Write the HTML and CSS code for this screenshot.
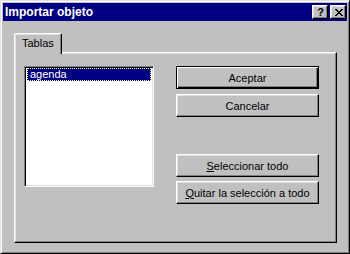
FILE: index.html
```html
<!DOCTYPE html>
<html lang="es">

<head>
    <meta charset="UTF-8">
    <meta name="viewport" content="width=device-width, initial-scale=1.0">
    <title>Importar objeto</title>
    <link rel="stylesheet" href="styles.css">
</head>

<body>
    <div class="window">
        <div class="titlebar">
            <span class="title">Importar objeto</span>
            <div class="controls">
                <button class="ctl">?</button>
                <button class="ctl">
                    <svg width="8" height="7" viewBox="0 0 8 7">
                        <path d="M0 0h2v1h1v1h2v-1h1v-1h2v1h-1v1h-1v1h-1v1h1v1h1v1h1v1h-2v-1h-1v-1h-2v1h-1v1h-2v-1h1v-1h1v-1h1v-1h-1v-1h-1v-1h-1z" fill="#000"/>
                    </svg>
                </button>
            </div>
        </div>
        <div class="content">
            <div class="tabs">
                <div class="tab">Tablas</div>
            </div>
            <div class="panel">
                <div class="listbox">
                    <div class="item selected">agenda</div>
                </div>
                <div class="actions">
                    <button class="btn default">Aceptar</button>
                    <button class="btn">Cancelar</button>
                    <button class="btn spaced"><u>S</u>eleccionar todo</button>
                    <button class="btn"><u>Q</u>uitar la selección a todo</button>
                </div>
            </div>
        </div>
    </div>
</body>

</html>
```

FILE: styles.css
```css
* {
    margin: 0;
    padding: 0;
    box-sizing: border-box;
}

body {
    background: #c0c0c0;
    font-family: 'Liberation Sans', Arial, sans-serif;
    font-size: 11px;
    color: #000;
}

/* window frame */
.window {
    width: 350px;
    height: 254px;
    display: flex;
    flex-direction: column;
    background: #c0c0c0;
    border: 1px solid;
    border-color: #dfdfdf #000 #000 #dfdfdf;
    box-shadow: inset 1px 1px #fff, inset -1px -1px #808080;
    padding: 2px;
}

.titlebar {
    height: 18px;
    background: #000080;
    display: flex;
    align-items: center;
    justify-content: space-between;
}

.title {
    color: #fff;
    font-weight: bold;
    font-size: 12px;
    padding-left: 2px;
}

.controls {
    display: flex;
    gap: 2px;
    margin-right: 1px;
}

.ctl {
    width: 16px;
    height: 14px;
    background: #c0c0c0;
    border: 1px solid;
    border-color: #fff #000 #000 #fff;
    box-shadow: inset -1px -1px #808080, inset 1px 1px #dfdfdf;
    font-family: 'Liberation Sans', Arial, sans-serif;
    font-weight: bold;
    font-size: 11px;
    line-height: 11px;
    display: flex;
    align-items: center;
    justify-content: center;
    padding-left: 1px;
}

/* dialog body */
.content {
    flex: 1;
    display: flex;
    flex-direction: column;
    padding: 12px 10px 8px 11px;
}

.tabs {
    display: flex;
    height: 19px;
}

.tab {
    position: relative;
    z-index: 1;
    width: 48px;
    height: 21px;
    background: #c0c0c0;
    border: 1px solid;
    border-color: #fff #000 transparent #fff;
    border-bottom: none;
    border-radius: 2px 2px 0 0;
    box-shadow: inset -1px 0 #808080, inset 1px 1px #dfdfdf;
    padding: 3px 0 0 7px;
}

.panel {
    flex: 1;
    display: flex;
    gap: 22px;
    border: 1px solid;
    border-color: #fff #000 #000 #fff;
    box-shadow: inset -1px -1px #808080, inset 1px 1px #dfdfdf;
    padding: 13px 0 0 9px;
}

.listbox {
    width: 130px;
    height: 121px;
    background: #fff;
    border: 1px solid;
    border-color: #808080 #fff #fff #808080;
    box-shadow: inset 1px 1px #000, inset -1px -1px #dfdfdf;
    padding: 1px 2px;
}

.item {
    height: 13px;
    line-height: 11px;
    padding-left: 2px;
}

.selected {
    background: #000080;
    color: #fff;
    border: 1px dotted #ffff80;
}

.actions {
    display: flex;
    flex-direction: column;
    gap: 4px;
}

.btn {
    width: 143px;
    height: 23px;
    background: #c0c0c0;
    border: 1px solid;
    border-color: #fff #000 #000 #fff;
    box-shadow: inset -1px -1px #808080, inset 1px 1px #dfdfdf;
    font-family: 'Liberation Sans', Arial, sans-serif;
    font-size: 11px;
    color: #000;
}

.btn.default {
    border: 1px solid #000;
    box-shadow: inset 1px 1px #fff, inset -1px -1px #000, inset -2px -2px #808080;
    margin-bottom: 1px;
}

.btn.spaced {
    margin-top: 33px;
}
```
